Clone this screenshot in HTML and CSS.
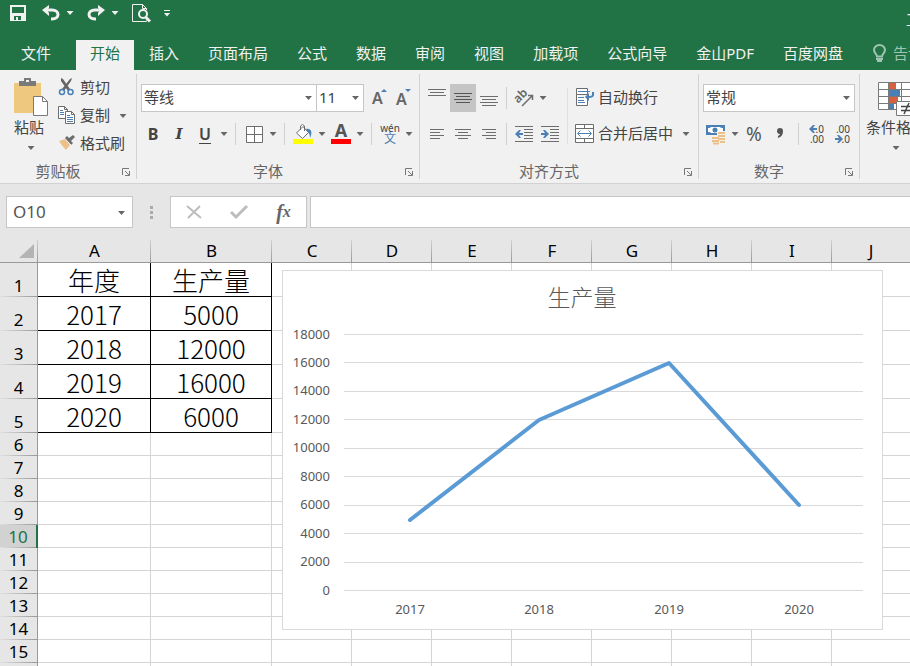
FILE: index.html
```html
<!DOCTYPE html>
<html lang="zh-CN">
<head>
  <meta charset="UTF-8">
  <title>工作簿</title>
  <link rel="stylesheet" href="styles.css">
</head>
<body>
  <header class="top">
    <div class="title-bar">
      <div class="quick">
        <button class="btn" aria-label="保存"><svg width="16" height="16" viewBox="0 0 16 16"><path fill="#f1f1f1" fill-rule="evenodd" d="M0 0H16V16H0ZM2 2V8H14V2ZM4 11V15H6V12H8V15H11V11Z"/></svg></button>
        <div class="pair">
          <button class="btn" aria-label="撤消"><svg width="20" height="16" viewBox="0 0 20 16"><path fill="none" stroke="#f1f1f1" stroke-width="3" d="M4 5H11C19 5 19 14 11 14H10"/><path fill="#f1f1f1" d="M1 5 8 0V3L6 5 8 8V11Z"/></svg></button>
          <button class="caret light" aria-label="撤消选项"></button>
        </div>
        <div class="pair">
          <button class="btn" aria-label="恢复"><svg width="20" height="16" viewBox="0 0 20 16"><path fill="none" stroke="#f1f1f1" stroke-width="3" d="M16 5H9C1 5 1 14 9 14H10"/><path fill="#f1f1f1" d="M19 5 12 0V3L14 5 12 8V11Z"/></svg></button>
          <button class="caret light" aria-label="恢复选项"></button>
        </div>
        <button class="btn" aria-label="打印预览"><svg width="20" height="20" viewBox="0 0 20 20"><path fill="none" stroke="#f1f1f1" d="M15.500 17.500V18.500H1.500V1.500H11.500L15.500 5.500V7M11.500 1.500V5.500H15.500"/><circle cx="12" cy="11" r="4" fill="none" stroke="#f1f1f1" stroke-width="2"/><path stroke="#f1f1f1" stroke-width="3" d="M14.500 14 19 18.500"/></svg></button>
        <button class="caret light more" aria-label="自定义快速访问工具栏"></button>
      </div>
      <div class="doc-title">工作簿1 - Excel</div>
    </div>
    <nav class="tabs">
      <button class="tab file">文件</button>
      <button class="tab active">开始</button>
      <button class="tab">插入</button>
      <button class="tab">页面布局</button>
      <button class="tab">公式</button>
      <button class="tab">数据</button>
      <button class="tab">审阅</button>
      <button class="tab">视图</button>
      <button class="tab">加载项</button>
      <button class="tab">公式向导</button>
      <button class="tab">金山PDF</button>
      <button class="tab">百度网盘</button>
      <button class="tell"><svg width="13" height="18" viewBox="0 0 13 18"><path fill="none" stroke="#a0c4af" stroke-width="2" d="M4 12.500C4 10 1 9 1 6A5.500 5 0 0 1 12 6C12 9 9 10 9 12.500Z"/><path fill="#a0c4af" d="M3 14H10V16H9V18H4V16H3Z"/></svg>告诉我您想要做什么</button>
    </nav>
  </header>

  <section class="ribbon">
    <div class="group clipboard">
      <div class="group-body">
        <button class="big">
          <svg width="34" height="38" viewBox="0 0 34 38"><path fill="#edc87e" d="M0 5H27V35H0Z"/><path fill="#7a7a7a" d="M5 3H10V0H17V3H22V8H5Z"/><path fill="#f1f1f1" d="M12 2H15V4H12Z"/><path fill="#fff" stroke="#7a7a7a" d="M19.500 18.500H28.500L33.500 23.500V37.500H19.500Z"/><path fill="none" stroke="#7a7a7a" d="M28.500 18.500V23.500H33.500"/></svg>
          <span>粘贴</span>
          <i class="arrow"></i>
        </button>
        <div class="stack">
          <button class="item"><svg width="18" height="18" viewBox="0 0 18 18"><path fill="#666" d="M3 0 5 1 12 11 10 13 3 3ZM14 0 13 3 6 13 4 11 12 1Z"/><g fill="none" stroke="#4a80b5" stroke-width="1.500"><circle cx="4" cy="14" r="2.500"/><circle cx="12.500" cy="14" r="2.500"/></g></svg>剪切</button>
          <div class="pair">
            <button class="item"><svg width="18" height="18" viewBox="0 0 18 18"><g fill="#fff" stroke="#6d6d6d"><path d="M.500.500H6.500L9.500 3.500V12.500H.500Z"/><path d="M7.500 5.500H13.500L16.500 8.500V17.500H7.500Z"/><path fill="none" d="M6.500.500V3.500H9.500M13.500 5.500V8.500H16.500"/></g><path stroke="#4a80b5" d="M2 4.500H5M2 6.500H6M2 8.500H6M9 9.500H12M9 11.500H15M9 13.500H15M9 15.500H15"/></svg>复制</button>
            <button class="caret wide" aria-label="复制选项"></button>
          </div>
          <button class="item"><svg width="18" height="18" viewBox="0 0 18 18"><path fill="#edc087" d="M1 7 7 5 12 11 8 16C6 14 3 10 1 7Z"/><path fill="#6d6d6d" d="M7 4 9 2 11 4 15 1 17 3 13 7 15 9 13 11Z"/><path stroke="#f1f1f1" d="M8 6 13 11"/></svg>格式刷</button>
        </div>
      </div>
      <div class="group-foot"><span>剪贴板</span><button class="launch" aria-label="剪贴板设置"><svg width="8" height="8" viewBox="0 0 8 8"><path fill="none" stroke="#777" d="M.500 7V.500H7M3 3 7 7M7.500 3V7.500H3"/></svg></button></div>
    </div>

    <div class="group font">
      <div class="group-body rows">
        <div class="row">
          <div class="combo name"><select aria-label="字体"><option>等线</option></select></div>
          <div class="combo size"><select aria-label="字号"><option>11</option></select></div>
          <button class="btn grow" aria-label="增大字号"><svg width="16" height="20" viewBox="0 0 16 20"><text class="letter" x="0" y="16">A</text><path fill="#4a80b5" d="M9 4 12 1 15 4Z"/></svg></button>
          <button class="btn grow" aria-label="减小字号"><svg width="16" height="20" viewBox="0 0 16 20"><text class="letter" x="0" y="17">A</text><path fill="#4a80b5" d="M9 1H15L12 4Z"/></svg></button>
        </div>
        <div class="row">
          <button class="btn bold">B</button>
          <button class="btn italic">I</button>
          <button class="btn underline">U</button>
          <button class="caret" aria-label="下划线选项"></button>
          <span class="sep"></span>
          <button class="btn" aria-label="边框"><svg width="17" height="17" viewBox="0 0 17 17"><path fill="#fff" stroke="#6d6d6d" d="M.500.500H16.500V16.500H.500ZM8.500.500V16.500M.500 8.500H16.500"/></svg></button>
          <button class="caret" aria-label="边框选项"></button>
          <span class="sep"></span>
          <button class="btn" aria-label="填充颜色"><svg width="20" height="20" viewBox="0 0 20 20"><path fill="#fff" stroke="#6d6d6d" d="M3.500 9 10 2.500 15.500 8.500 9.500 14.500ZM7.500 6V2Q9.500-1 11.500 2V7"/><path fill="#4a80b5" d="M13 5C18 4 20 8 17 14 17 11 16 9 15 8Z"/><path fill="#ff0" d="M0 15H20V20H0Z"/></svg></button>
          <button class="caret" aria-label="填充颜色选项"></button>
          <button class="btn" aria-label="字体颜色"><svg width="20" height="20" viewBox="0 0 20 20"><text class="letter big-letter" x="10" y="13" text-anchor="middle">A</text><path fill="#f00" d="M0 15H20V20H0Z"/></svg></button>
          <button class="caret" aria-label="字体颜色选项"></button>
          <span class="sep"></span>
          <button class="btn pinyin"><span>wén</span><b>文</b></button>
          <button class="caret" aria-label="拼音选项"></button>
        </div>
      </div>
      <div class="group-foot"><span>字体</span><button class="launch" aria-label="字体设置"><svg width="8" height="8" viewBox="0 0 8 8"><path fill="none" stroke="#777" d="M.500 7V.500H7M3 3 7 7M7.500 3V7.500H3"/></svg></button></div>
    </div>

    <div class="group align">
      <div class="group-body">
        <div class="rows">
          <div class="row">
            <button class="btn" aria-label="顶端对齐"><svg width="18" height="18" viewBox="0 0 18 18"><path stroke="#6d6d6d" d="M0 .500H18M2 3.500H16M0 6.500H18"/></svg></button>
            <button class="btn on" aria-label="垂直居中"><svg width="18" height="18" viewBox="0 0 18 18"><path stroke="#555" d="M0 4.500H18M2 7.500H16M0 10.500H18M2 13.500H16"/></svg></button>
            <button class="btn" aria-label="底端对齐"><svg width="18" height="18" viewBox="0 0 18 18"><path stroke="#6d6d6d" d="M0 7.500H18M2 10.500H16M0 13.500H18M2 16.500H16"/></svg></button>
            <span class="sep"></span>
            <button class="btn" aria-label="方向"><svg width="20" height="20" viewBox="0 0 20 20"><text class="slant" x="2" y="15" transform="rotate(-45 4 13)">ab</text><path fill="none" stroke="#6d6d6d" stroke-width="1.500" d="M8 18 18 8M14 7.500H18.500V12"/></svg></button>
            <button class="caret" aria-label="方向选项"></button>
          </div>
          <div class="row">
            <button class="btn" aria-label="左对齐"><svg width="14" height="14" viewBox="0 0 14 14"><path stroke="#6d6d6d" d="M0 2.500H14M0 5.500H10M0 8.500H14M0 11.500H10"/></svg></button>
            <button class="btn" aria-label="居中"><svg width="16" height="14" viewBox="0 0 16 14"><path stroke="#6d6d6d" d="M0 2.500H16M3 5.500H13M0 8.500H16M3 11.500H13"/></svg></button>
            <button class="btn" aria-label="右对齐"><svg width="14" height="14" viewBox="0 0 14 14"><path stroke="#6d6d6d" d="M0 2.500H14M4 5.500H14M0 8.500H14M4 11.500H14"/></svg></button>
            <span class="sep"></span>
            <button class="btn" aria-label="减少缩进量"><svg width="18" height="16" viewBox="0 0 18 16"><path stroke="#6d6d6d" d="M0 .500H18M9 3.500H18M9 6.500H18M9 9.500H18M9 12.500H18M0 15.500H18"/><path fill="#4a80b5" d="M0 8 4 4H6L4 7H8V9H4L6 12H4Z"/></svg></button>
            <button class="btn" aria-label="增加缩进量"><svg width="18" height="16" viewBox="0 0 18 16"><path stroke="#6d6d6d" d="M0 .500H18M9 3.500H18M9 6.500H18M9 9.500H18M9 12.500H18M0 15.500H18"/><path fill="#4a80b5" d="M8 8 4 4H2L4 7H0V9H4L2 12H4Z"/></svg></button>
          </div>
        </div>
        <div class="rows wrap">
          <div class="row">
            <button class="item"><svg width="20" height="19" viewBox="0 0 20 19"><path fill="#fff" stroke="#6d6d6d" d="M1.500.500H12.500V6.500H1.500ZM12.500 11V17.500H1.500V6.500"/><path stroke="#4a80b5" d="M3 3.500H15M3 9.500H9M3 12.500H9M3 14.500H10"/><path fill="none" stroke="#4a80b5" stroke-width="2" d="M18 4V7Q18 9 13 9"/><path fill="#4a80b5" d="M10 9 14 5V13Z"/></svg>自动换行</button>
          </div>
          <div class="row">
            <button class="item"><svg width="20" height="19" viewBox="0 0 20 19"><path fill="#fff" stroke="#6d6d6d" d="M.500.500H18.500V18.500H.500ZM.500 4.500H18.500M.500 14.500H18.500M9.500.500V4.500M9.500 14.500V18.500"/><path fill="none" stroke="#4a80b5" d="M3 9.500H16M5.500 6.500 2.500 9.500 5.500 12.500M13.500 6.500 16.500 9.500 13.500 12.500"/></svg>合并后居中</button>
            <button class="caret wide" aria-label="合并选项"></button>
          </div>
        </div>
      </div>
      <div class="group-foot"><span>对齐方式</span><button class="launch" aria-label="对齐设置"><svg width="8" height="8" viewBox="0 0 8 8"><path fill="none" stroke="#777" d="M.500 7V.500H7M3 3 7 7M7.500 3V7.500H3"/></svg></button></div>
    </div>

    <div class="group number">
      <div class="group-body rows">
        <div class="row">
          <div class="combo format"><select aria-label="数字格式"><option>常规</option></select></div>
        </div>
        <div class="row">
          <button class="btn" aria-label="会计数字格式"><svg width="20" height="20" viewBox="0 0 20 20"><path fill="#4a80b5" d="M0 1H19V11H0Z"/><path fill="#fff" d="M2 4Q5 4 5 3H14Q14 4 17 4V8Q14 8 14 9H5Q5 8 2 8Z"/><circle cx="9" cy="6" r="2.500" fill="#4a80b5"/><path fill="#f1f1f1" d="M11 7H20V20H5V12H11Z"/><g stroke="#edc087" stroke-width="2"><path d="M12 9H19M12 12H19M12 15H19M6 14H13M6 17H13M7 19.500H13M14 18H19"/></g></svg></button>
          <button class="caret" aria-label="会计格式选项"></button>
          <button class="btn percent">%</button>
          <button class="btn comma" aria-label="千位分隔样式"><svg width="8" height="12" viewBox="0 0 8 12"><path fill="#555" d="M1 3A3 3 0 0 1 7 3C7 7 5 9 2 10V8Q4 7 4 6 1 6 1 3Z"/></svg></button>
          <span class="sep"></span>
          <button class="btn" aria-label="增加小数位数"><svg width="18" height="20" viewBox="0 0 18 20"><path fill="#4a80b5" d="M1 5 5 1H7L5 4H9V6H5L7 9H5Z"/><g class="decimal"><text x="16" y="9">.0</text><text x="16" y="19">.00</text></g></svg></button>
          <button class="btn" aria-label="减少小数位数"><svg width="18" height="20" viewBox="0 0 18 20"><path fill="#4a80b5" d="M9 15 5 11H3L5 14H1V16H5L3 19H5Z"/><g class="decimal"><text x="16" y="9">.00</text><text x="16" y="19">.0</text></g></svg></button>
        </div>
      </div>
      <div class="group-foot"><span>数字</span><button class="launch" aria-label="数字设置"><svg width="8" height="8" viewBox="0 0 8 8"><path fill="none" stroke="#777" d="M.500 7V.500H7M3 3 7 7M7.500 3V7.500H3"/></svg></button></div>
    </div>

    <div class="group styles">
      <div class="group-body">
        <button class="big">
          <svg width="38" height="38" viewBox="0 0 38 38"><path fill="#fff" stroke="#7a7a7a" d="M1.500 4.500H37.500V31.500H1.500ZM1.500 11.500H37.500M1.500 18.500H37.500M1.500 25.500H37.500M11.500 4.500V31.500M24.500 4.500V31.500"/><path fill="#d9603f" d="M12 5H19V11H12ZM12 19H21V25H12Z"/><path fill="#4a80b5" d="M12 12H23V18H12ZM12 26H17V31H12Z"/><path fill="#fff" stroke="#7a7a7a" d="M19.500 23.500H36.500V37.500H19.500Z"/><path stroke="#444" stroke-width="1.500" d="M24 28.500H34M24 32.500H34M32 25 27 36"/></svg>
          <span>条件格式</span>
          <i class="arrow"></i>
        </button>
      </div>
    </div>
  </section>

  <section class="formula-bar">
    <div class="combo cell-ref"><input type="text" value="O10" aria-label="名称框"></div>
    <div class="dots"><i></i><i></i><i></i></div>
    <div class="fx-box">
      <button aria-label="取消"><svg width="16" height="14" viewBox="0 0 16 14"><path fill="none" stroke="#bdbdbd" stroke-width="2" d="M1 1 15 13M14 1 2 13"/></svg></button>
      <button aria-label="输入"><svg width="18" height="14" viewBox="0 0 18 14"><path fill="none" stroke="#bdbdbd" stroke-width="3" d="M1 7 6 12 17 1"/></svg></button>
      <button class="fx">f<small>x</small></button>
    </div>
    <input class="formula" type="text" aria-label="编辑栏">
  </section>

  <main class="sheet">
    <table>
      <colgroup><col class="c-head"><col class="c-a"><col class="c-b"><col class="c"><col class="c"><col class="c"><col class="c"><col class="c"><col class="c"><col class="c"><col></colgroup>
      <thead>
        <tr><th class="corner"></th><th>A</th><th>B</th><th>C</th><th>D</th><th>E</th><th>F</th><th>G</th><th>H</th><th>I</th><th>J</th></tr>
      </thead>
      <tbody>
        <tr class="tall"><th>1</th><td class="data">年度</td><td class="data">生产量</td><td></td><td></td><td></td><td></td><td></td><td></td><td></td><td></td></tr>
        <tr class="tall"><th>2</th><td class="data">2017</td><td class="data">5000</td><td></td><td></td><td></td><td></td><td></td><td></td><td></td><td></td></tr>
        <tr class="tall"><th>3</th><td class="data">2018</td><td class="data">12000</td><td></td><td></td><td></td><td></td><td></td><td></td><td></td><td></td></tr>
        <tr class="tall"><th>4</th><td class="data">2019</td><td class="data">16000</td><td></td><td></td><td></td><td></td><td></td><td></td><td></td><td></td></tr>
        <tr class="tall"><th>5</th><td class="data">2020</td><td class="data">6000</td><td></td><td></td><td></td><td></td><td></td><td></td><td></td><td></td></tr>
        <tr><th>6</th><td></td><td></td><td></td><td></td><td></td><td></td><td></td><td></td><td></td><td></td></tr>
        <tr><th>7</th><td></td><td></td><td></td><td></td><td></td><td></td><td></td><td></td><td></td><td></td></tr>
        <tr><th>8</th><td></td><td></td><td></td><td></td><td></td><td></td><td></td><td></td><td></td><td></td></tr>
        <tr><th>9</th><td></td><td></td><td></td><td></td><td></td><td></td><td></td><td></td><td></td><td></td></tr>
        <tr class="current"><th>10</th><td></td><td></td><td></td><td></td><td></td><td></td><td></td><td></td><td></td><td></td></tr>
        <tr><th>11</th><td></td><td></td><td></td><td></td><td></td><td></td><td></td><td></td><td></td><td></td></tr>
        <tr><th>12</th><td></td><td></td><td></td><td></td><td></td><td></td><td></td><td></td><td></td><td></td></tr>
        <tr><th>13</th><td></td><td></td><td></td><td></td><td></td><td></td><td></td><td></td><td></td><td></td></tr>
        <tr><th>14</th><td></td><td></td><td></td><td></td><td></td><td></td><td></td><td></td><td></td><td></td></tr>
        <tr><th>15</th><td></td><td></td><td></td><td></td><td></td><td></td><td></td><td></td><td></td><td></td></tr>
        <tr><th></th><td></td><td></td><td></td><td></td><td></td><td></td><td></td><td></td><td></td><td></td></tr>
      </tbody>
    </table>

    <!-- floating chart object -->
    <figure class="chart">
      <svg width="599" height="358" viewBox="0 0 599 358">
        <text class="chart-title" x="299" y="35">生产量</text>
        <path class="grid-lines" d="M61 63.500H580M61 91.500H580M61 120.500H580M61 148.500H580M61 177.500H580M61 205.500H580M61 234.500H580M61 262.500H580M61 291.500H580M61 319.500H580"/>
        <g class="y-axis">
          <text x="47" y="68">18000</text>
          <text x="47" y="96">16000</text>
          <text x="47" y="124">14000</text>
          <text x="47" y="153">12000</text>
          <text x="47" y="181">10000</text>
          <text x="47" y="210">8000</text>
          <text x="47" y="238">6000</text>
          <text x="47" y="267">4000</text>
          <text x="47" y="295">2000</text>
          <text x="47" y="324">0</text>
        </g>
        <g class="x-axis">
          <text x="127" y="343">2017</text>
          <text x="256" y="343">2018</text>
          <text x="386" y="343">2019</text>
          <text x="516" y="343">2020</text>
        </g>
        <polyline class="series" points="127,249 256,149 386,92 516,234"/>
      </svg>
    </figure>
  </main>
</body>
</html>
```

FILE: styles.css
```css
* { box-sizing:border-box; }
body {
  margin:0; height:100vh; overflow:hidden;
  display:flex; flex-direction:column;
  font:15px/20px "Noto Sans","Noto Sans CJK SC",sans-serif;
  color:#444; background:#fff;
}
button, input, select { font:inherit; color:inherit; margin:0; padding:0; border:0; background:none; }
svg { display:block; flex:none; overflow:visible; }

/* title bar and tabs */
.top { background:#217346; color:#f1f1f1; overflow:hidden; }
.title-bar { display:flex; height:40px; }
.quick { display:flex; gap:7px; height:26px; padding-left:5px; }
.pair { display:flex; align-items:center; }
.doc-title { margin-left:auto; width:4px; line-height:38px; white-space:nowrap; }
.tabs { display:flex; gap:1px; height:30px; white-space:nowrap; }
.tab { flex:none; padding:0 14px 4px; }
.tab.file { padding:0 21px 4px; margin-right:3px; }
.tab.active { background:#f1f1f1; color:#217346; }
.tell { display:flex; align-items:center; gap:7px; margin-left:15px; padding-bottom:4px; color:#a0c4af; }

/* shared controls */
.btn { width:26px; height:26px; flex:none; display:flex; align-items:center; justify-content:center; }
.caret { width:12px; height:26px; flex:none; display:flex; flex-direction:column; align-items:center; justify-content:center; gap:2px; }
.caret::after, .arrow {
  content:""; width:7px; height:4px; background:#666;
  clip-path:polygon(0 0,100% 0,50% 100%);
}
.caret.light::after { background:#f1f1f1; }
.caret.more::before { content:""; width:6px; height:1px; background:#f1f1f1; }
.caret.wide { margin-left:7px; }
.sep { width:1px; height:22px; margin:0 5px; background:#d0d0d0; }
.item { display:flex; align-items:center; gap:4px; padding-bottom:2px; white-space:nowrap; }
.combo { position:relative; height:28px; border:1px solid #c6c6c6; background:#fff; }
.combo select, .combo input { width:100%; height:100%; padding:0 0 2px 2px; appearance:none; outline:none; }
.combo::after {
  content:""; position:absolute; right:4px; top:11px;
  width:7px; height:4px; background:#666; pointer-events:none;
  clip-path:polygon(0 0,100% 0,50% 100%);
}

/* ribbon */
.ribbon { display:flex; padding:4px 0; background:#f1f1f1; border-bottom:1px solid #d2d2d2; overflow:hidden; }
.group { flex:none; border-right:1px solid #d2d2d2; }
.group-body { display:flex; height:88px; }
.group-foot { display:flex; align-items:center; height:17px; color:#666; }
.group-foot span { flex:1; text-align:center; padding-right:6px; }
.launch { margin-right:6px; padding-top:2px; }
.big { display:flex; flex-direction:column; align-items:center; gap:1px; padding-top:4px; white-space:nowrap; }
.big .arrow { margin-top:8px; }
.row { display:flex; align-items:center; height:28px; }
.rows { display:flex; flex-direction:column; gap:8px; padding-top:10px; }
.clipboard { width:137px; }
.clipboard .big { width:48px; padding-left:14px; flex:none; }
.clipboard .big span { align-self:flex-start; }
.stack { display:flex; flex-direction:column; padding-left:10px; }
.stack > * { height:28px; }
.font { width:283px; }
.font .group-body { padding-left:3px; }
.combo.name { width:176px; margin-left:1px; }
.combo.size { width:48px; margin-left:-1px; margin-right:4px; }
.grow { width:24px; }
.letter { font-size:16px; font-weight:600; fill:#666; }
.big-letter { font-size:18px; font-weight:700; fill:#555; }
.bold { font-weight:700; font-size:16px; }
.italic { font:italic bold 15px "DejaVu Serif",serif; }
.underline { font-weight:600; font-size:16px; text-decoration:underline; text-underline-offset:3px; }
.pinyin { flex-direction:column; font-size:10px; line-height:10px; }
.pinyin b { font-size:12px; line-height:12px; font-weight:400; color:#4a80b5; }
.align { width:279px; }
.align .group-body { padding-left:4px; }
.align .sep { margin:0 4px; }
.on { background:#c5c5c5; height:28px; }
.slant { font-size:12px; font-weight:600; fill:#666; }
.wrap { position:relative; margin-left:4px; padding-left:8px; }
.wrap::before { content:""; position:absolute; left:0; top:14px; width:1px; height:56px; background:#e0e0e0; }
.wrap .item { gap:3px; }
.number { width:161px; }
.number .group-body { padding-left:4px; }
.combo.format { width:152px; }
.percent { font-size:19px; color:#555; }
.decimal { font-size:10px; fill:#444; text-anchor:end; }
.styles { flex:1 0 50px; width:50px; border-right:0; }
.styles .big { padding-left:6px; }

/* formula bar */
.formula-bar { display:flex; height:56px; padding:12px 0 12px 6px; background:#e6e6e6; }
.cell-ref { width:127px; height:32px; font-size:17px; color:#555; }
.cell-ref input { padding-left:6px; }
.cell-ref::after { right:7px; top:14px; }
.dots { width:37px; display:flex; flex-direction:column; align-items:center; justify-content:center; gap:2px; }
.dots i { width:3px; height:3px; background:#aaa; }
.fx-box { display:flex; width:137px; margin-right:3px; background:#fff; border:1px solid #c6c6c6; }
.fx-box button { flex:1; display:flex; align-items:center; justify-content:center; }
.fx-box .fx { font:italic bold 20px "Liberation Serif",serif; color:#666; }
.fx small { font-size:16px; }
.formula { flex:1; min-width:0; background:#fff; border:1px solid #c6c6c6; border-right:0; outline:none; padding:0 6px; }

/* sheet */
.sheet { position:relative; flex:1; min-height:0; overflow:hidden; }
table { table-layout:fixed; width:100%; border-collapse:separate; border-spacing:0; }
.c-head { width:38px; }
.c-a { width:113px; }
.c-b { width:121px; }
.c { width:80px; }
th, td { height:23px; padding:0; text-align:center; border-right:1px solid #d4d4d4; border-bottom:1px solid #d4d4d4; }
td:last-child { border-right:0; }
th { font-size:17px; line-height:22px; font-weight:400; color:#000; background:#e6e6e6; vertical-align:bottom; }
thead th { border-right:0; border-bottom-color:#999; background:linear-gradient(#d0d0d0,#999) right/1px 100% no-repeat #e6e6e6; }
thead th:last-child { background:#e6e6e6; }
tbody th { border-bottom:0; border-right-color:#999; background:linear-gradient(to right,#e0e0e0,#999) bottom/100% 1px no-repeat #e6e6e6; }
.corner::after { content:""; display:block; width:15px; height:14px; margin:0 0 4px 19px; background:#b4b4b4; clip-path:polygon(100% 0,100% 100%,0 100%); }
.tall th, .tall td { height:34px; }
.tall .data {
  font:300 26px/33px "Noto Sans CJK SC",sans-serif; color:#000;
  border-color:#000;
}
.current th { color:#217346; background-color:#d2d2d2; border-right:2px solid #217346; }

/* chart */
.chart { position:absolute; left:282px; top:30px; margin:0; background:#fff; border:1px solid #d9d9d9; }
.chart text { fill:#595959; font-size:13px; }
.chart .chart-title { font-size:23px; text-anchor:middle; font-family:"Noto Sans CJK SC",sans-serif; font-weight:300; }
.grid-lines { stroke:#d9d9d9; }
.y-axis { text-anchor:end; }
.x-axis { text-anchor:middle; }
.series { fill:none; stroke:#5b9bd5; stroke-width:4; stroke-linecap:round; stroke-linejoin:round; }
```
